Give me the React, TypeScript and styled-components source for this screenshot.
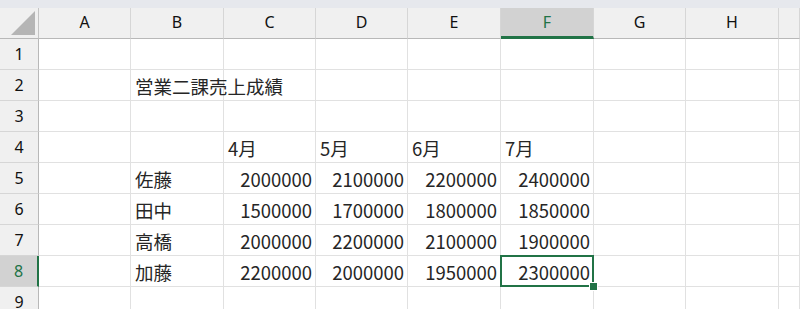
import styled, {createGlobalStyle, css} from 'styled-components';

const GlobalStyle = createGlobalStyle`
  html, body {
    margin: 0;
    padding: 0;
    background: #ffffff;
    overflow: hidden;
  }
`;

const COLS = ['A', 'B', 'C', 'D', 'E', 'F', 'G', 'H', ''];
const WIDTHS = [92, 93, 92, 92, 93, 93, 92, 93];
const GREEN = '#217346';

type CellValue = {text: string; num?: boolean};

const DATA: Record<number, Record<string, CellValue>> = {
  2: {B: {text: '営業二課売上成績'}},
  4: {C: {text: '4月'}, D: {text: '5月'}, E: {text: '6月'}, F: {text: '7月'}},
  5: {
    B: {text: '佐藤'},
    C: {text: '2000000', num: true},
    D: {text: '2100000', num: true},
    E: {text: '2200000', num: true},
    F: {text: '2400000', num: true},
  },
  6: {
    B: {text: '田中'},
    C: {text: '1500000', num: true},
    D: {text: '1700000', num: true},
    E: {text: '1800000', num: true},
    F: {text: '1850000', num: true},
  },
  7: {
    B: {text: '高橋'},
    C: {text: '2000000', num: true},
    D: {text: '2200000', num: true},
    E: {text: '2100000', num: true},
    F: {text: '1900000', num: true},
  },
  8: {
    B: {text: '加藤'},
    C: {text: '2200000', num: true},
    D: {text: '2000000', num: true},
    E: {text: '1950000', num: true},
    F: {text: '2300000', num: true},
  },
};

const ROWS = [1, 2, 3, 4, 5, 6, 7, 8, 9];
const ACTIVE = {col: 'F', row: 8};

const Page = styled.div`
  width: 800px;
  height: 309px;
  overflow: hidden;
  background: #ffffff;
  display: flex;
  flex-direction: column;
`;

const TopStrip = styled.div`
  height: 8px;
  background: #e6e8ed;
  flex-shrink: 0;
`;

const Grid = styled.div`
  display: grid;
  grid-template-columns: 39px ${WIDTHS.map(w => `${w}px`).join(' ')} 1fr;
  grid-auto-rows: 31px;
  font-family: 'Noto Sans CJK JP', 'Noto Sans', sans-serif;
`;

const Corner = styled.div`
  position: relative;
  background: #f0f0f0;
  border-right: 1px solid #c4c4c4;
  border-bottom: 1px solid #b8b8b8;
  box-sizing: border-box;
`;

const Triangle = styled.div`
  position: absolute;
  right: 3px;
  bottom: 3px;
  width: 0;
  height: 0;
  border-left: 24px solid transparent;
  border-bottom: 24px solid #b5b5b5;
`;

const ColHead = styled.div<{$active: boolean}>`
  box-sizing: border-box;
  display: flex;
  align-items: center;
  justify-content: center;
  padding-bottom: 2px;
  background: #f0f0f0;
  border-right: 1px solid #d6d6d6;
  border-bottom: 1px solid #b8b8b8;
  font-family: 'Noto Sans', sans-serif;
  font-size: 16px;
  color: #111111;
  ${({$active}) =>
    $active &&
    css`
      background: #d2d2d2;
      color: ${GREEN};
      border-bottom: 3px solid ${GREEN};
      padding-bottom: 0;
    `}
`;

const RowHead = styled.div<{$active: boolean}>`
  box-sizing: border-box;
  display: flex;
  align-items: center;
  justify-content: center;
  background: #f0f0f0;
  border-right: 1px solid #b8b8b8;
  border-bottom: 1px solid #d6d6d6;
  font-family: 'Noto Sans', sans-serif;
  font-size: 16px;
  color: #111111;
  ${({$active}) =>
    $active &&
    css`
      background: #d2d2d2;
      color: ${GREEN};
      border-right: 2px solid ${GREEN};
    `}
`;

const Cell = styled.div<{$num?: boolean}>`
  position: relative;
  box-sizing: border-box;
  display: flex;
  align-items: center;
  justify-content: ${({$num}) => ($num ? 'flex-end' : 'flex-start')};
  padding: 1px ${({$num}) => ($num ? '3px' : '0')} 0 ${({$num}) => ($num ? '0' : '4px')};
  border-right: 1px solid #e1e1e1;
  border-bottom: 1px solid #e1e1e1;
  font-size: 18.5px;
  color: #262626;
  white-space: nowrap;
  overflow: visible;
`;

const Selection = styled.div`
  position: absolute;
  z-index: 2;
  left: -1px;
  top: -1px;
  right: -1px;
  bottom: -1px;
  border: 2px solid ${GREEN};
  pointer-events: none;
`;

const FillHandle = styled.div`
  position: absolute;
  right: -6px;
  bottom: -6px;
  width: 7px;
  height: 7px;
  background: ${GREEN};
  border: 1px solid #ffffff;
`;

export default function App() {
  return (
    <Page>
      <GlobalStyle />
      <TopStrip />
      <Grid>
        <Corner>
          <Triangle />
        </Corner>
        {COLS.map((c, i) => (
          <ColHead key={`h${i}`} $active={c === ACTIVE.col}>
            {c}
          </ColHead>
        ))}
        {ROWS.map(r => (
          <Row key={r} row={r} />
        ))}
      </Grid>
    </Page>
  );
}

function Row({row}: {row: number}) {
  const values = DATA[row] ?? {};
  return (
    <>
      <RowHead $active={row === ACTIVE.row}>{row}</RowHead>
      {COLS.map((c, i) => {
        const v = values[c];
        const active = c === ACTIVE.col && row === ACTIVE.row;
        return (
          <Cell key={`${row}-${i}`} $num={v?.num}>
            {v?.text}
            {active && (
              <Selection>
                <FillHandle />
              </Selection>
            )}
          </Cell>
        );
      })}
    </>
  );
}
